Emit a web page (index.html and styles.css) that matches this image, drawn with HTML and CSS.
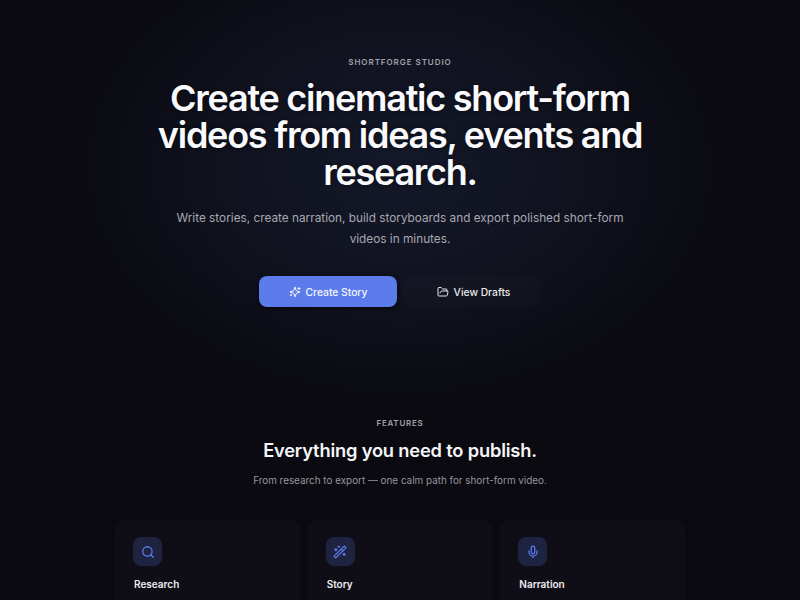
FILE: index.html
```html
<!DOCTYPE html>
<html>
<head>
  <title>ShortForge Studio</title>
  <link rel="stylesheet" href="styles.css">
</head>
<body>
  <section class="hero">
    <p class="eyebrow">SHORTFORGE STUDIO</p>
    <h1>Create cinematic short-form videos from ideas, events and research.</h1>
    <p class="lead">Write stories, create narration, build storyboards and export polished short-form videos in minutes.</p>
    <div class="actions">
      <a class="btn btn-primary">
        <svg class="btn-icon" viewBox="0 0 24 24"><path d="M9.937 15.500A2 2 0 0 0 8.500 14.063l-6.135-1.582a.5.5 0 0 1 0-.962L8.500 9.936A2 2 0 0 0 9.937 8.500l1.582-6.135a.5.5 0 0 1 .963 0L14.063 8.500A2 2 0 0 0 15.500 9.937l6.135 1.581a.5.5 0 0 1 0 .964L15.500 14.063a2 2 0 0 0-1.437 1.437l-1.582 6.135a.5.5 0 0 1-.963 0z"/><path d="M20 3v4M22 5h-4M4 17v2M5 18H3"/></svg>
        Create Story
      </a>
      <a class="btn btn-ghost">
        <svg class="btn-icon" viewBox="0 0 24 24"><path d="M6 14l1.500-2.900A2 2 0 0 1 9.240 10H20a2 2 0 0 1 1.940 2.500l-1.540 6a2 2 0 0 1-1.950 1.500H4a2 2 0 0 1-2-2V5a2 2 0 0 1 2-2h3.900a2 2 0 0 1 1.690.9l.81 1.200a2 2 0 0 0 1.670.9H18a2 2 0 0 1 2 2v2"/></svg>
        View Drafts
      </a>
    </div>
  </section>

  <section class="features">
    <p class="eyebrow eyebrow-small">FEATURES</p>
    <h2>Everything you need to publish.</h2>
    <p class="sub">From research to export — one calm path for short-form video.</p>
    <div class="cards">
      <div class="card">
        <div class="card-icon">
          <svg viewBox="0 0 24 24"><circle cx="11" cy="11" r="8"/><path d="M21 21l-4.300-4.300"/></svg>
        </div>
        <h3>Research</h3>
      </div>
      <div class="card">
        <div class="card-icon">
          <svg viewBox="0 0 24 24"><path d="M21.640 3.640l-1.280-1.280a1.210 1.210 0 0 0-1.720 0L2.360 18.640a1.210 1.210 0 0 0 0 1.720l1.280 1.280a1.200 1.200 0 0 0 1.720 0L21.640 5.360a1.200 1.200 0 0 0 0-1.720"/><path d="M14 7l3 3M5 6v4M19 14v4M10 2v2M7 8H3M21 16h-4M11 3H9"/></svg>
        </div>
        <h3>Story</h3>
      </div>
      <div class="card">
        <div class="card-icon">
          <svg viewBox="0 0 24 24"><rect x="9" y="2" width="6" height="13" rx="3"/><path d="M19 10v2a7 7 0 0 1-14 0v-2M12 19v3"/></svg>
        </div>
        <h3>Narration</h3>
      </div>
    </div>
  </section>
</body>
</html>
```

FILE: styles.css
```css
html {
  background-color: #0a0a10;
}

body {
  margin: 0;
  height: 600px;
  overflow: hidden;
  color: #f5f5f7;
  font-family: Inter, "Liberation Sans", sans-serif;
  text-align: center;
  background: radial-gradient(ellipse 330px 240px at 400px 165px, #141829 0%, #10121e 55%, #0a0a10 100%);
}

p, h1, h2, h3 {
  margin: 0;
}

.hero {
  padding-top: 57px;
  height: 343px;
  box-sizing: border-box;
}

.eyebrow {
  font-size: 8px;
  line-height: 11px;
  font-weight: 600;
  letter-spacing: 0.95px;
  color: #a0a0aa;
}

.eyebrow-small {
  letter-spacing: 0.75px;
}

h1 {
  width: 500px;
  margin: 12px auto 0;
  font-size: 36px;
  line-height: 37px;
  font-weight: 600;
  letter-spacing: -1.25px;
  color: #fafafc;
  text-shadow: 0 0 4px rgba(0, 0, 0, 0.5);
}

.lead {
  width: 480px;
  margin: 17px auto 0;
  font-size: 11.800px;
  line-height: 20.500px;
  color: #a8a8b2;
}

.actions {
  display: flex;
  justify-content: center;
  gap: 6px;
  margin-top: 27px;
}

.btn {
  display: flex;
  align-items: center;
  justify-content: center;
  gap: 5px;
  width: 138px;
  height: 31px;
  box-sizing: border-box;
  border-radius: 8px;
  font-size: 10.300px;
  font-weight: 500;
}

.btn-primary {
  background-color: #5b7cea;
  color: #f5f7ff;
  box-shadow: 0 1px 5px rgba(0, 0, 0, 0.7);
}

.btn-ghost {
  padding-left: 3px;
  background-color: rgba(255, 255, 255, 0.015);
  color: #e8e8ec;
}

.btn-icon {
  width: 12px;
  height: 12px;
  fill: none;
  stroke: currentColor;
  stroke-width: 2;
  stroke-linecap: round;
  stroke-linejoin: round;
}

.features {
  padding-top: 75px;
}

h2 {
  margin-top: 9px;
  font-size: 18.300px;
  line-height: 24px;
  font-weight: 600;
  letter-spacing: -0.01em;
  color: #f5f5f7;
}

.sub {
  margin-top: 10px;
  font-size: 9.900px;
  line-height: 16px;
  color: #96969f;
}

.cards {
  display: grid;
  grid-template-columns: repeat(3, 1fr);
  gap: 8px;
  width: 570px;
  margin: 32px auto 0;
}

.card {
  height: 120px;
  box-sizing: border-box;
  padding: 17px 18px;
  border-radius: 10px;
  background-color: #0f0e17;
  box-shadow: 0 0 5px rgba(15, 14, 23, 0.8);
  text-align: left;
}

.card-icon {
  display: flex;
  align-items: center;
  justify-content: center;
  width: 29px;
  height: 29px;
  border-radius: 8px;
  background-color: #1d2340;
}

.card-icon svg {
  width: 14px;
  height: 14px;
  fill: none;
  stroke: #5b7cec;
  stroke-width: 2.200;
  stroke-linecap: round;
  stroke-linejoin: round;
}

h3 {
  margin-top: 11px;
  padding-left: 1px;
  font-size: 10px;
  line-height: 14px;
  font-weight: 600;
  color: #ececf0;
}
```
